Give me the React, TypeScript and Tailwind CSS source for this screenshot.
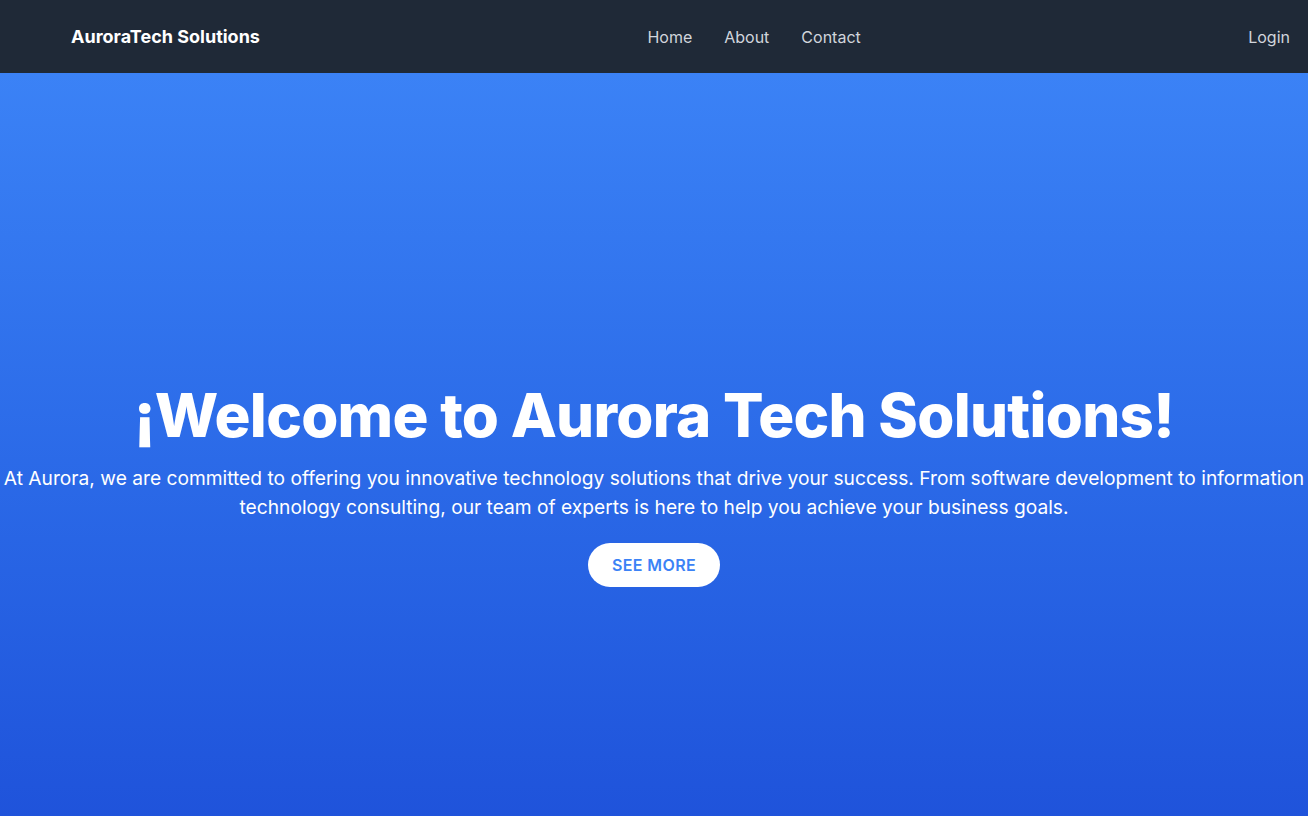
export default function App() {
  return (
    <div className="min-h-screen font-['Inter',sans-serif]">
      <header className="flex h-[73px] items-center justify-between bg-[#1f2937] pl-[71px] pr-[18px]">
        <span className="text-lg font-bold text-white">AuroraTech Solutions</span>
        <nav className="flex items-center gap-8 text-base text-gray-300">
          <a href="#">Home</a>
          <a href="#">About</a>
          <a href="#">Contact</a>
        </nav>
        <a href="#" className="text-base text-gray-300">
          Login
        </a>
      </header>
      <section className="flex min-h-screen flex-col items-center justify-center bg-gradient-to-b from-[#3b82f6] to-[#1d4ed8] pt-[10px] text-center text-white">
        <h1 className="text-6xl font-extrabold tracking-[-0.012em]">¡Welcome to Aurora Tech Solutions!</h1>
        <p className="mt-[19px] text-[19.2px] leading-[29px]">
          At Aurora, we are committed to offering you innovative technology solutions that drive your success. From software development to information technology consulting, our team of experts is here to help you achieve your business goals.
        </p>
        <button className="mt-[21px] rounded-full bg-white px-6 py-2.5 text-base font-semibold uppercase tracking-wide text-[#3b82f6]">
          See more
        </button>
      </section>
    </div>
  );
}
